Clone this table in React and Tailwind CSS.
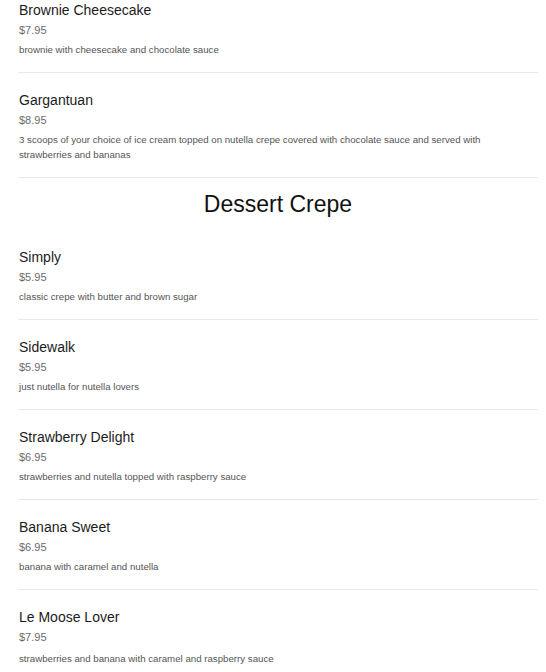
import React from 'react';

const brownies = [
    { name: 'Brownie Cheesecake', price: '$7.95', desc: 'brownie with cheesecake and chocolate sauce' },
    { name: 'Gargantuan', price: '$8.95', desc: '3 scoops of your choice of ice cream topped on nutella crepe covered with chocolate sauce and served with strawberries and bananas' },
];

const crepes = [
    { name: 'Simply', price: '$5.95', desc: 'classic crepe with butter and brown sugar' },
    { name: 'Sidewalk', price: '$5.95', desc: 'just nutella for nutella lovers' },
    { name: 'Strawberry Delight', price: '$6.95', desc: 'strawberries and nutella topped with raspberry sauce' },
    { name: 'Banana Sweet', price: '$6.95', desc: 'banana with caramel and nutella' },
    { name: 'Le Moose Lover', price: '$7.95', desc: 'strawberries and banana with caramel and raspberry sauce' },
];

function MenuItem({ item, first, last }) {
    return (
        <div className={`${first ? 'pt-0' : 'pt-[17px]'} pb-[15px] pl-px ${last ? '' : 'border-b border-[#e9e9e9]'}`}>
            <h3 className="text-[14px] leading-[20px] text-[#1c1c1c]">{item.name}</h3>
            <p className="text-[11px] leading-[20px] text-[#6b6b6b]">{item.price}</p>
            <p className={`${last ? 'mt-[4px]' : 'mt-[2px]'} text-[9.7px] leading-[15px] text-[#555] pr-[30px]`}>{item.desc}</p>
        </div>
    );
}

export default function App() {
    return (
        <div className="w-[546px] h-[672px] overflow-hidden bg-white font-['Liberation_Sans',Arial,sans-serif]">
            <div className="pl-[18px] pr-[8px]">
                {brownies.map((item, i) => (
                    <MenuItem key={item.name} item={item} first={i === 0} />
                ))}

                <div className="pt-[12px] pb-[12px] text-center">
                    <h2 className="text-[23px] leading-[28px] text-[#111]">Dessert Crepe</h2>
                </div>

                {crepes.map((item, i) => (
                    <MenuItem key={item.name} item={item} last={i === crepes.length - 1} />
                ))}
            </div>
        </div>
    );
}
